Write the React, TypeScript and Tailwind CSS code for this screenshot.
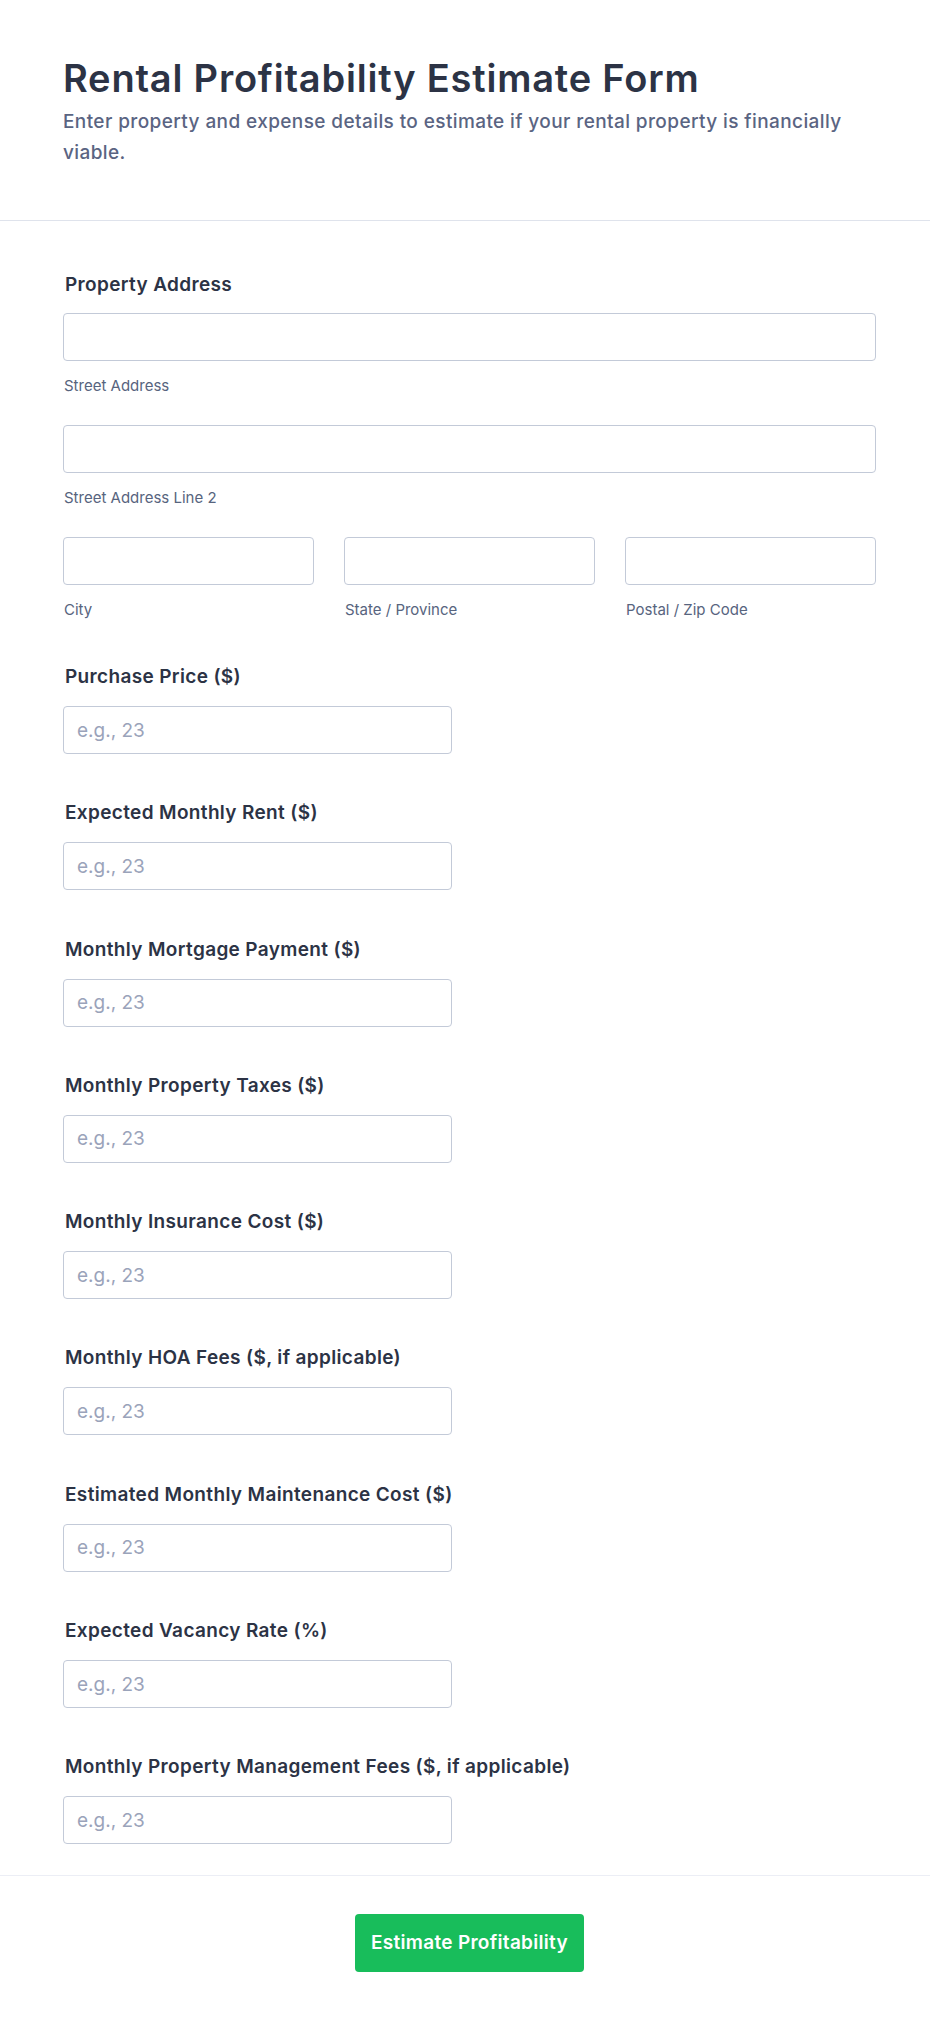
import React from 'react';

const fields = [
  'Purchase Price ($)',
  'Expected Monthly Rent ($)',
  'Monthly Mortgage Payment ($)',
  'Monthly Property Taxes ($)',
  'Monthly Insurance Cost ($)',
  'Monthly HOA Fees ($, if applicable)',
  'Estimated Monthly Maintenance Cost ($)',
  'Expected Vacancy Rate (%)',
  'Monthly Property Management Fees ($, if applicable)',
];

function TextBox({ placeholder }: { placeholder?: string }) {
  return (
    <input
      type="text"
      placeholder={placeholder}
      className="block h-12 w-full rounded-[4px] border border-[#c3cad8] bg-white px-[13px] text-[19px] text-[#2c3345] placeholder:text-[#9aa3ba] outline-none"
    />
  );
}

function SubLabel({ children }: { children: React.ReactNode }) {
  return <p className="mt-[15px] px-[1px] text-[15px] leading-5 text-[#57647e]">{children}</p>;
}

function FieldLabel({ children }: { children: React.ReactNode }) {
  return (
    <label className="block px-[2px] text-[19px] font-semibold leading-[27px] tracking-[0.35px] text-[#2c3345]">
      {children}
    </label>
  );
}

export default function App() {
  return (
    <div className="min-h-screen bg-white font-['Inter','Noto_Sans',sans-serif]">
      {/* Header */}
      <header className="border-b border-[#dfe3ec] pl-[63px] pr-[54px] pt-[56px] pb-[52px]">
        <h1 className="text-[38px] font-semibold leading-[44px] tracking-[0.8px] text-[#2c3345]">
          Rental Profitability Estimate Form
        </h1>
        <p className="mt-[6px] text-[19px] font-medium leading-[31px] tracking-[0.4px] text-[#5a6482]">
          Enter property and expense details to estimate if your rental property is financially viable.
        </p>
      </header>

      {/* Form fields */}
      <form className="pl-[63px] pr-[54px] pt-[50px] pb-[31px]">
        <div>
          <FieldLabel>Property Address</FieldLabel>
          <div className="mt-[15px]">
            <TextBox />
            <SubLabel>Street Address</SubLabel>
          </div>
          <div className="mt-[29px]">
            <TextBox />
            <SubLabel>Street Address Line 2</SubLabel>
          </div>
          <div className="mt-[29px] grid grid-cols-3 gap-[30px]">
            <div>
              <TextBox />
              <SubLabel>City</SubLabel>
            </div>
            <div>
              <TextBox />
              <SubLabel>State / Province</SubLabel>
            </div>
            <div>
              <TextBox />
              <SubLabel>Postal / Zip Code</SubLabel>
            </div>
          </div>
        </div>

        {fields.map((f, i) => (
          <div key={f} className={i === 0 ? 'mt-[43px]' : 'mt-[45.3px]'}>
            <FieldLabel>{f}</FieldLabel>
            <div className="mt-4 w-[389px]">
              <TextBox placeholder="e.g., 23" />
            </div>
          </div>
        ))}
      </form>

      {/* Submit */}
      <div className="flex justify-center border-t border-[#eceef5] pl-[63px] pr-[54px] pt-[38px] pb-[50px]">
        <button
          type="button"
          className="h-[58px] rounded-[4px] bg-[#18bd5b] px-4 text-[19px] font-semibold tracking-[0.3px] text-white"
        >
          Estimate Profitability
        </button>
      </div>
    </div>
  );
}
